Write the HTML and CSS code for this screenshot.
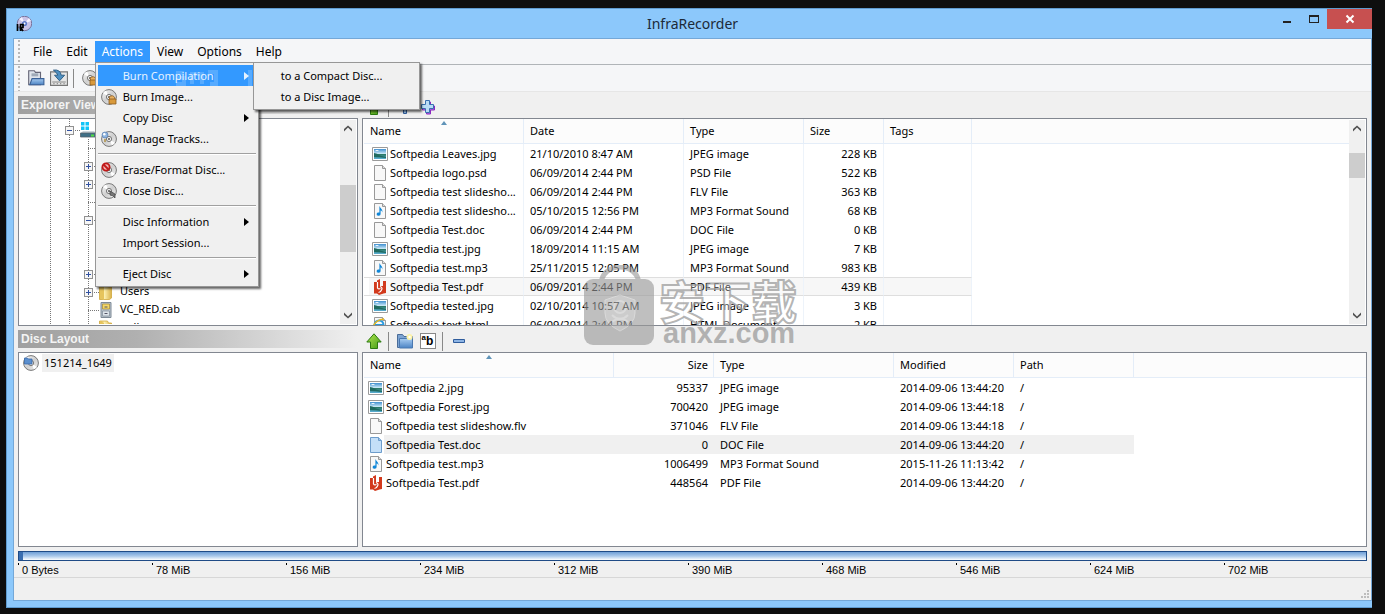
FILE: index.html
```html
<!DOCTYPE html>
<html lang="en">
<head>
<meta charset="utf-8">
<title>InfraRecorder</title>
<link rel="stylesheet" href="styles.css">
</head>
<body>
<svg class="defs" aria-hidden="true">
  <defs>
    <linearGradient id="g-disc" x1="0" y1="0" x2="1" y2="1"><stop offset="0" stop-color="#fff"/><stop offset=".5" stop-color="#cfcfcf"/><stop offset="1" stop-color="#f2f2f2"/></linearGradient>
    <linearGradient id="g-pic" x1="0" y1="0" x2="0" y2="1"><stop offset="0" stop-color="#3f8fd0"/><stop offset=".5" stop-color="#d4eefa"/><stop offset=".55" stop-color="#2c7a68"/><stop offset="1" stop-color="#5cb0d8"/></linearGradient>
    <linearGradient id="g-green" x1="0" y1="0" x2="1" y2="1"><stop offset="0" stop-color="#b5e853"/><stop offset="1" stop-color="#3f9a12"/></linearGradient>
    <linearGradient id="g-blue" x1="0" y1="0" x2="0" y2="1"><stop offset="0" stop-color="#a9cdf2"/><stop offset="1" stop-color="#4b83c4"/></linearGradient>
    <linearGradient id="g-fold" x1="0" y1="0" x2="1" y2="0"><stop offset="0" stop-color="#e0b84c"/><stop offset=".4" stop-color="#fdf0b0"/><stop offset="1" stop-color="#d9b24a"/></linearGradient>
  </defs>
  <symbol id="disc" viewBox="0 0 16 16"><circle cx="8" cy="8" r="7.4" fill="url(#g-disc)" stroke="#777"/><path d="M8 8L2 4a7 7 0 0 1 3-2.500zM8 8l6 4a7 7 0 0 1-3 2.300z" fill="#fff"/><circle cx="8" cy="8" r="2.600" fill="#eee" stroke="#777"/><circle cx="8" cy="8" r="1" fill="#555"/></symbol>
  <symbol id="burn" viewBox="0 0 16 16"><use href="#disc"/><path d="M8 8q4-3 6 1l-1 2H9z" fill="#e8b060" stroke="#8a5a20" stroke-width=".8"/><path d="M8 10h7v5H8z" fill="#d99a3c" stroke="#8a5a20" stroke-width=".8"/></symbol>
  <symbol id="tracks" viewBox="0 0 16 16"><use href="#disc"/><circle cx="4" cy="4" r="3" fill="#8db4e0" stroke="#5a7fb0" stroke-width=".7"/><circle cx="3.300" cy="3.200" r="1.200" fill="#fff"/><path d="M4 8v3" stroke="#b09040" stroke-width="1.500"/></symbol>
  <symbol id="erase" viewBox="0 0 16 16"><use href="#disc"/><circle cx="5" cy="5" r="3.600" fill="#f3b0b0" stroke="#c01818" stroke-width="1.800"/><path d="M2.500 2.500l5 5" stroke="#c01818" stroke-width="1.800"/></symbol>
  <symbol id="close-disc" viewBox="0 0 16 16"><use href="#disc"/><path d="M9 8l5 3v4l-2-2-3-1z" fill="#777" stroke="#444" stroke-width=".7"/></symbol>
  <symbol id="data-disc" viewBox="0 0 16 16"><use href="#disc"/><path d="M1.500 3h3l1 1h3.500v5H1.500z" fill="#5b8fce" stroke="#3868a8" stroke-width=".8"/></symbol>
  <symbol id="ir" viewBox="0 0 16 16"><circle cx="8.500" cy="7.500" r="7.200" fill="#c9c3e8" stroke="#77739c"/><path d="M8.500 7.500L13 2l2 3zM8.500 7.500L3 3l3-2z" fill="#f4f0ff"/><circle cx="8.500" cy="7.500" r="2.600" fill="#5c78c8"/><circle cx="8.500" cy="7.500" r="1" fill="#fff"/><path d="M1.500 8v7M4.500 15V8.500h2.500v3H4.500l2.500 3.500" stroke="#000" stroke-width="1.700" fill="none"/></symbol>
  <symbol id="open" viewBox="0 0 16 16"><path d="M1.500 1.500h5l1 1.500h4.500V14H1.500z" fill="#dfe5ec" stroke="#667"/><path d="M4 6h6M4 4.500h6" stroke="#8a97a6"/><path d="M4.500 8.500h10.500v5.500H2.500z" fill="url(#g-blue)" stroke="#3a6298"/></symbol>
  <symbol id="save" viewBox="0 0 16 16"><path d="M.5 2.500h15v12H.5z" fill="#e6e6e6" stroke="#777"/><path d="M2 11.500h12M3 13h1M6 13h1M9 13h1M12 13h1" stroke="#888"/><path d="M3 1q6-1 7 4.500h3l-4.500 5L4 5.500h3Q6 3 3 1z" fill="#4e8fc0" stroke="#28587f" stroke-width=".8"/></symbol>
  <symbol id="pic" viewBox="0 0 16 16"><path d="M.5 1.500h15v13H.5z" fill="#fff" stroke="#9a9a9a"/><path d="M2 3h12v10H2z" fill="url(#g-pic)"/><path d="M2 7q3 0 6 2.500L14 11v1q-7-1-12-1z" fill="#1f6a60"/><path d="M3 5q2-2 4 0" fill="#fff"/></symbol>
  <symbol id="page" viewBox="0 0 16 16"><path d="M2.500.5h8l3 3v12h-11z" fill="#f8f8f8" stroke="#999"/><path d="M10.500.5v3h3" fill="#ddd" stroke="#999"/></symbol>
  <symbol id="page-sel" viewBox="0 0 16 16"><path d="M2.500.5h8l3 3v12h-11z" fill="#c4dff8" stroke="#6d9ccb"/><path d="M10.500.5v3h3" fill="#9fc5ea" stroke="#6d9ccb"/></symbol>
  <symbol id="music" viewBox="0 0 16 16"><use href="#page"/><path d="M8 3.500c0 2 3 2.500 2.300 6-.3-1.700-1.200-2-1.700-2V11a2 1.600 0 1 1-1.200-1.400V3.500z" fill="#0f86d8"/></symbol>
  <symbol id="pdf" viewBox="0 0 16 16"><path d="M2 3h3V1.500L8 0v7h3V2h3v12l-2.500.5L7 16l-2-1.500H2z" fill="#d2391c"/><path d="M5.500 3v6q1 1.500 3 .5M8 7.500q3 1 1.500 3.500Q8.500 13.500 6.500 13.500" stroke="#fff" stroke-width="1.200" fill="none"/></symbol>
  <symbol id="html" viewBox="0 0 16 16"><use href="#page"/><circle cx="7" cy="8" r="4.500" fill="none" stroke="#2a9be0" stroke-width="2"/><path d="M3 8h8" stroke="#2a9be0" stroke-width="2"/><path d="M1 10Q3 3 12 2" stroke="#e8b820" stroke-width="1.500" fill="none"/></symbol>
  <symbol id="up" viewBox="0 0 16 16"><path d="M8 .8l7.200 8.200h-3.700v6.500h-7V9H.8z" fill="url(#g-green)" stroke="#2c7a10"/></symbol>
  <symbol id="newfolder" viewBox="0 0 16 16"><path d="M.5 1.500h5l1.500 2h8.500v11H.5z" fill="#7da4d2" stroke="#4a6c98"/><path d="M2.500 5.500h13v9.500h-13z" fill="url(#g-blue)" stroke="#4a78b0"/><circle cx="12.500" cy="4" r="3" fill="#fdf3a8"/><circle cx="12.500" cy="4" r="1.200" fill="#fff"/></symbol>
  <symbol id="plus" viewBox="0 0 16 16"><path d="M6.500 3h4v4h4v4h-4v4h-4v-4h-4V7h4z" fill="#b06fe0" stroke="#8a28c0"/><path d="M5.500 1.500h4v4h4v4h-4v4h-4v-4h-4v-4h4z" fill="#b9dcf5" stroke="#3a70b0"/></symbol>
  <symbol id="plus1" viewBox="0 0 16 16"><path d="M6.500 1.500h3v5h5v3h-5v5h-3v-5h-5v-3h5z" fill="#9cc4ee" stroke="#2f5c9c"/></symbol>
  <symbol id="minus" viewBox="0 0 16 16"><path d="M2.500 6.500h11v3h-11z" fill="#8db4e4" stroke="#2f5c9c"/></symbol>
  <symbol id="folder" viewBox="0 0 16 16"><path d="M1.500 1h8l1 2h3v11l-2 1.500h-10z" fill="url(#g-fold)" stroke="#d0a83c" stroke-width=".8"/><path d="M2 1l4 2v13l-4-2z" fill="#e6c45c"/></symbol>
  <symbol id="cab" viewBox="0 0 16 16"><path d="M3 .5h10v15H3z" fill="#b9c4ce" stroke="#7e8a96"/><path d="M4.500 2h7v5h-7z" fill="#f4d868" stroke="#a88a30" stroke-width=".7"/><path d="M4.500 9h7v5h-7z" fill="#dde4ea" stroke="#7e8a96" stroke-width=".7"/><path d="M6.500 5h3M6.500 11.500h3" stroke="#556"/></symbol>
  <symbol id="pc" viewBox="0 0 16 18"><path d="M1 1h3.500v3.500H1zM5.500 1H9v3.500H5.500zM1 5.500h3.500V9H1zM5.500 5.500H9V9H5.500z" fill="#10c4f8"/><path d="M3 10h11l2 2H1z" fill="#ccd4da"/><path d="M.5 12h15v4H.5z" fill="#3f6f86" stroke="#55606a" stroke-width=".8"/><path d="M11 13.500h3v2h-3z" fill="#50e040"/></symbol>
  <symbol id="chev" viewBox="0 0 8 8"><path d="M0 6.500L4 2.500l4 4V4L4 .5 0 4z" fill="#505050"/></symbol>
</svg>

<main class="window">
  <header class="titlebar">
    <svg class="i16"><use href="#ir"/></svg>
    <h1>InfraRecorder</h1>
    <div class="winbtns">
      <button class="winbtn" aria-label="Minimize"><svg width="10" height="10"><path d="M1 7h8v2H1z" fill="#222"/></svg></button>
      <button class="winbtn" aria-label="Maximize"><svg width="10" height="10"><path d="M0 1h10v8H0zM1 3v5h8V3z" fill="#222" fill-rule="evenodd"/></svg></button>
      <button class="winbtn close" aria-label="Close"><svg width="10" height="10"><path d="M1.500 1.500l7 7M8.500 1.500l-7 7" stroke="#fff" stroke-width="2"/></svg></button>
    </div>
  </header>

  <div class="client">
    <nav class="menubar grip">
      <button class="menu">File</button>
      <button class="menu">Edit</button>
      <div class="menuwrap">
        <button class="menu open" aria-expanded="true">Actions</button>
        <div class="dropdown actions">
          <button class="item hot"><span class="ic"></span><span>Burn Compilation</span><i class="arr"></i></button>
          <button class="item"><svg class="i16"><use href="#burn"/></svg><span>Burn Image...</span></button>
          <button class="item"><span class="ic"></span><span>Copy Disc</span><i class="arr"></i></button>
          <button class="item"><svg class="i16"><use href="#tracks"/></svg><span>Manage Tracks...</span></button>
          <hr>
          <button class="item"><svg class="i16"><use href="#erase"/></svg><span>Erase/Format Disc...</span></button>
          <button class="item"><svg class="i16"><use href="#close-disc"/></svg><span>Close Disc...</span></button>
          <hr>
          <button class="item"><span class="ic"></span><span>Disc Information</span><i class="arr"></i></button>
          <button class="item"><span class="ic"></span><span>Import Session...</span></button>
          <hr>
          <button class="item"><span class="ic"></span><span>Eject Disc</span><i class="arr"></i></button>
          <svg class="ghost" width="96" height="28"><path d="M0 6h8M0 6v5h8v6H0M16 17V7h10v10M32 5h8v12h-6M74 3v18h8v-12h10v14" fill="none" stroke="#fff" stroke-width="4" opacity=".18"/></svg>
          <div class="dropdown sub">
            <button class="item"><span class="ic"></span><span>to a Compact Disc...</span></button>
            <button class="item"><span class="ic"></span><span>to a Disc Image...</span></button>
          </div>
        </div>
      </div>
      <button class="menu">View</button>
      <button class="menu">Options</button>
      <button class="menu">Help</button>
    </nav>

    <div class="toolbar grip">
      <button class="tool" aria-label="Open"><svg class="i18"><use href="#open"/></svg></button>
      <button class="tool" aria-label="Save"><svg class="i18"><use href="#save"/></svg></button>
      <span class="tsep"></span>
      <button class="tool" aria-label="Burn"><svg class="i16"><use href="#burn"/></svg></button>
    </div>

    <div class="work">
      <h2 class="caption">Explorer View</h2>
      <div class="toolbar small">
        <button class="tool" aria-label="Up"><svg class="i16"><use href="#up"/></svg></button>
        <span class="tsep"></span>
        <button class="tool" aria-label="Add"><svg class="i16"><use href="#plus1"/></svg></button>
        <button class="tool" aria-label="Add all"><svg class="i16"><use href="#plus"/></svg></button>
      </div>

      <section class="pane">
        <div class="tree">
          <div class="node root"><b class="box"></b><svg class="i18"><use href="#pc"/></svg></div>
          <div class="kids">
            <div class="node"></div>
            <div class="node"><b class="box plus"></b></div>
            <div class="node"><b class="box plus"></b></div>
            <div class="node"></div>
            <div class="node"><b class="box"></b></div>
            <div class="node none"></div>
            <div class="node none"></div>
            <div class="node"><b class="box plus"></b></div>
            <div class="node"><b class="box plus"></b><svg class="i16"><use href="#folder"/></svg><span>Users</span></div>
            <div class="node"><svg class="i16"><use href="#cab"/></svg><span>VC_RED.cab</span></div>
            <div class="node"><svg class="i16"><use href="#folder"/></svg><span>null</span></div>
          </div>
        </div>
        <div class="scroll left"><svg class="i8"><use href="#chev"/></svg><div class="track"><div class="thumb"></div></div><svg class="i8 down"><use href="#chev"/></svg></div>
      </section>

      <section class="pane">
        <div class="listwrap">
          <table class="list lines">
            <colgroup><col class="c160"><col class="c160"><col class="c120"><col class="c80"><col class="c88"><col></colgroup>
            <thead><tr><th class="sorted">Name</th><th>Date</th><th>Type</th><th>Size</th><th>Tags</th><th class="fill"></th></tr></thead>
            <tbody>
              <tr><td><svg class="i16"><use href="#pic"/></svg>Softpedia Leaves.jpg</td><td>21/10/2010 8:47 AM</td><td>JPEG image</td><td class="num">228 KB</td><td></td><td></td></tr>
              <tr><td><svg class="i16"><use href="#page"/></svg>Softpedia logo.psd</td><td>06/09/2014 2:44 PM</td><td>PSD File</td><td class="num">522 KB</td><td></td><td></td></tr>
              <tr><td><svg class="i16"><use href="#page"/></svg>Softpedia test slidesho...</td><td>06/09/2014 2:44 PM</td><td>FLV File</td><td class="num">363 KB</td><td></td><td></td></tr>
              <tr><td><svg class="i16"><use href="#music"/></svg>Softpedia test slidesho...</td><td>05/10/2015 12:56 PM</td><td>MP3 Format Sound</td><td class="num">68 KB</td><td></td><td></td></tr>
              <tr><td><svg class="i16"><use href="#page"/></svg>Softpedia Test.doc</td><td>06/09/2014 2:44 PM</td><td>DOC File</td><td class="num">0 KB</td><td></td><td></td></tr>
              <tr><td><svg class="i16"><use href="#pic"/></svg>Softpedia test.jpg</td><td>18/09/2014 11:15 AM</td><td>JPEG image</td><td class="num">7 KB</td><td></td><td></td></tr>
              <tr><td><svg class="i16"><use href="#music"/></svg>Softpedia test.mp3</td><td>25/11/2015 12:05 PM</td><td>MP3 Format Sound</td><td class="num">983 KB</td><td></td><td></td></tr>
              <tr class="focus"><td><svg class="i16"><use href="#pdf"/></svg>Softpedia Test.pdf</td><td>06/09/2014 2:44 PM</td><td>PDF File</td><td class="num">439 KB</td><td></td><td></td></tr>
              <tr><td><svg class="i16"><use href="#pic"/></svg>Softpedia tested.jpg</td><td>02/10/2014 10:57 AM</td><td>JPEG image</td><td class="num">3 KB</td><td></td><td></td></tr>
              <tr><td><svg class="i16"><use href="#html"/></svg>Softpedia text.html</td><td>06/09/2014 2:44 PM</td><td>HTML Document</td><td class="num">2 KB</td><td></td><td></td></tr>
            </tbody>
          </table>
        </div>
        <div class="scroll right"><svg class="i8"><use href="#chev"/></svg><div class="track"><div class="thumb"></div></div><svg class="i8 down"><use href="#chev"/></svg></div>
      </section>

      <h2 class="caption">Disc Layout</h2>
      <div class="toolbar small">
        <button class="tool" aria-label="Up"><svg class="i16"><use href="#up"/></svg></button>
        <span class="tsep"></span>
        <button class="tool" aria-label="New folder"><svg class="i16"><use href="#newfolder"/></svg></button>
        <button class="tool" aria-label="Rename"><span class="ab"><sup>a</sup>b</span></button>
        <span class="tsep"></span>
        <button class="tool" aria-label="Remove"><svg class="i16"><use href="#minus"/></svg></button>
      </div>

      <section class="pane">
        <div class="disc"><svg class="i16"><use href="#data-disc"/></svg><span>151214_1649</span></div>
      </section>

      <section class="pane">
        <div class="listwrap">
          <table class="list tight">
            <colgroup><col class="c250"><col class="c100"><col class="c180"><col class="c120"><col class="c120"><col></colgroup>
            <thead><tr><th class="sorted">Name</th><th class="num">Size</th><th>Type</th><th>Modified</th><th>Path</th><th class="fill"></th></tr></thead>
            <tbody>
              <tr><td><svg class="i16"><use href="#pic"/></svg>Softpedia 2.jpg</td><td class="num">95337</td><td>JPEG image</td><td>2014-09-06 13:44:20</td><td>/</td><td></td></tr>
              <tr><td><svg class="i16"><use href="#pic"/></svg>Softpedia Forest.jpg</td><td class="num">700420</td><td>JPEG image</td><td>2014-09-06 13:44:18</td><td>/</td><td></td></tr>
              <tr><td><svg class="i16"><use href="#page"/></svg>Softpedia test slideshow.flv</td><td class="num">371046</td><td>FLV File</td><td>2014-09-06 13:44:18</td><td>/</td><td></td></tr>
              <tr class="picked"><td><svg class="i16"><use href="#page-sel"/></svg>Softpedia Test.doc</td><td class="num">0</td><td>DOC File</td><td>2014-09-06 13:44:20</td><td>/</td><td></td></tr>
              <tr><td><svg class="i16"><use href="#music"/></svg>Softpedia test.mp3</td><td class="num">1006499</td><td>MP3 Format Sound</td><td>2015-11-26 11:13:42</td><td>/</td><td></td></tr>
              <tr><td><svg class="i16"><use href="#pdf"/></svg>Softpedia Test.pdf</td><td class="num">448564</td><td>PDF File</td><td>2014-09-06 13:44:20</td><td>/</td><td></td></tr>
            </tbody>
          </table>
        </div>
      </section>
    </div>

    <div class="space">
      <div class="meter"><div class="used"></div></div>
      <div class="ruler"><span>0 Bytes</span><span>78 MiB</span><span>156 MiB</span><span>234 MiB</span><span>312 MiB</span><span>390 MiB</span><span>468 MiB</span><span>546 MiB</span><span>624 MiB</span><span>702 MiB</span></div>
    </div>
    <footer class="status"><svg width="8" height="8"><path d="M6 0h2v2H6zM3 3h2v2H3zM6 3h2v2H6zM0 6h2v2H0zM3 6h2v2H3zM6 6h2v2H6z" fill="#bdbdbd"/></svg></footer>
  </div>
</main>

<svg class="mark" width="214" height="82" aria-hidden="true">
  <g opacity=".62">
    <path d="M17 20C17 -4 55 -4 55 20" fill="none" stroke="#999" stroke-width="5"/>
    <rect x="0" y="14" width="70" height="66" rx="9" fill="#999"/>
    <path d="M36 30l15 5v13q0 11-15 18-15-7-15-18V35z" fill="#adadad" stroke="#c4c4c4"/>
    <circle cx="36" cy="42" r="6" fill="none" stroke="#c4c4c4" stroke-width="2"/>
    <path d="M28 50q8 8 16 0M28 57q8-7 16 0" fill="none" stroke="#c4c4c4" stroke-width="2"/>
  </g>
  <text x="75" y="54" class="cjk">安下载</text>
  <text x="79" y="78" class="dom">anxz.com</text>
</svg>
</body>
</html>
```
FILE: styles.css
```css
* { box-sizing: border-box; }
body {
  margin: 0; height: 100vh; padding: 8px 13px 6px 6px; background: #0e0e0e;
  font: 11px/16px "Noto Sans", "Open Sans", sans-serif; color: #000;
  display: flex; position: relative; overflow: hidden;
}
button { font: inherit; color: inherit; background: none; border: 0; padding: 0; margin: 0; text-align: left; }
svg { display: block; flex: none; }
.defs { position: absolute; width: 0; height: 0; }
.i8 { width: 8px; height: 8px; }
.i16 { width: 16px; height: 16px; }
.i18 { width: 18px; height: 18px; }
.down { transform: rotate(180deg); }

.window {
  flex: 1; min-width: 0; display: flex; flex-direction: column; background: #8cc8fb;
  border: 1px solid #5f9bcf; border-right: 0; padding: 0 0 6px 6px;
}
.titlebar { height: 29px; display: flex; align-items: center; justify-content: space-between; padding-left: 3px; position: relative; }
.titlebar h1 { margin: 0; font-size: 14px; line-height: 20px; font-weight: 400; position: absolute; left: 0; right: 0; text-align: center; color: #1c2a38; }
.winbtns { display: flex; align-self: flex-start; height: 20px; position: relative; }
.winbtn { width: 27px; display: flex; align-items: center; justify-content: center; }
.winbtn.close { width: 45px; background: #c75050; }

.client { flex: 1; min-height: 0; display: flex; flex-direction: column; background: #f0f0f0; border: 1px solid #74a8d8; }
.menubar, .toolbar { display: flex; align-items: center; }
.grip { background: #f5f6f8 radial-gradient(circle, #b8b8b8 1px, transparent 1px) 3px 0 / 4px 4px repeat-y; }
.menubar { height: 26px; padding-left: 12px; border-bottom: 1px solid #b0b4b8; font-size: 12px; }
.menu { height: 21px; padding: 0 7px; line-height: 20px; display: block; }
.menu.open { background: #3399ff; color: #fff; }
.menuwrap { position: relative; }

.dropdown {
  position: absolute; background: #f0f0f0; border: 1px solid #979797; padding: 2px;
  box-shadow: 2px 2px 2px #0009; z-index: 5; color: #000;
}
.actions { top: 21px; left: 0; width: 164px; }
.sub { top: -1px; left: 157px; width: 167px; }
.item { display: flex; align-items: center; gap: 6px; width: 100%; height: 21px; padding: 0 7px 0 3px; font-size: 11px; white-space: nowrap; }
.ic { width: 16px; }
.hot { background: #3399ff; color: #e6f2ff; }
.arr { margin-left: auto; border: 4px solid transparent; border-left: 5px solid currentColor; border-right: 0; }
.dropdown hr { margin: 4px 0; height: 2px; border: 0; border-top: 1px solid #a0a0a0; background: #fff; }
.ghost { position: absolute; left: 80px; top: 4px; pointer-events: none; }

.toolbar { height: 27px; padding-left: 10px; border-bottom: 1px solid #e6e6e6; }
.toolbar.small { height: 18px; margin-top: 2px; padding: 0; border: 0; }
.tool { width: 23px; height: 23px; display: flex; align-items: center; justify-content: center; flex: none; }
.tsep { width: 8px; height: 19px; flex: none; background: linear-gradient(#888, #888) 3px 0 / 1px 100% no-repeat; }
.ab { width: 16px; height: 16px; border: 1px solid #888; background: #fff; font: bold 12px/15px "Liberation Sans", sans-serif; text-align: center; }
.ab sup { font-size: 8px; line-height: 6px; vertical-align: 5px; }

.work {
  flex: 1; min-height: 0; display: grid; gap: 4px; padding: 4px 4px 0;
  grid-template-columns: 340px minmax(0, 1fr);
  grid-template-rows: 18px minmax(0, 208fr) 18px minmax(0, 195fr);
}
.caption { margin: 0; padding-left: 3px; font: bold 12px/18px "Liberation Sans", sans-serif; color: #f4f4f4; background: linear-gradient(90deg, #a0a0a0, #b0b0b0 35%, #f0f0f0); }
.pane { background: #fff; border: 1px solid #828790; display: flex; min-width: 0; min-height: 0; overflow: hidden; }

.tree {
  flex: 1; padding: 2px 0 0 31px; overflow: hidden; margin-bottom: 1px;
  background:
    repeating-linear-gradient(#777 0 1px, transparent 1px 2px) 31px 0 / 1px 100% no-repeat,
    repeating-linear-gradient(#777 0 1px, transparent 1px 2px) 50px 0 / 1px 100% no-repeat;
}
.kids { margin-left: 38px; background: repeating-linear-gradient(#777 0 1px, transparent 1px 2px) 0 0 / 1px 100% no-repeat; }
.node { height: 18px; display: flex; align-items: center; position: relative; padding-left: 10px; background: repeating-linear-gradient(90deg, #777 0 1px, transparent 1px 2px) 0 9px / 12px 1px no-repeat; }
.node.root { margin-left: 19px; }
.node.none { background: none; }
.node span { margin-left: 6px; line-height: 14px; padding-bottom: 2px; }
.box { position: absolute; left: -4px; top: 5px; width: 9px; height: 9px; border: 1px solid #919191; background: linear-gradient(#3050a0, #3050a0) 1px 3px / 5px 1px no-repeat, #f6f6f6; }
.box.plus { background: linear-gradient(#3050a0, #3050a0) 1px 3px / 5px 1px no-repeat, linear-gradient(#3050a0, #3050a0) 3px 1px / 1px 5px no-repeat, #f6f6f6; }

.scroll { width: 16px; margin: 1px 1px 1px 0; background: #f0f0f0; display: flex; flex-direction: column; align-items: center; padding: 5px 0; flex: none; }
.track { flex: 1; align-self: stretch; display: flex; flex-direction: column; }
.thumb { background: #cdcdcd; }
.left .track { padding-top: 52px; }
.left .thumb { height: 67px; }
.right .track { padding-top: 20px; }
.right .thumb { height: 25px; }

.listwrap { flex: 1; min-width: 0; overflow: hidden; padding-left: 1px; }
.list { table-layout: fixed; width: 100%; border-collapse: separate; border-spacing: 0; }
.c80 { width: 80px; } .c88 { width: 88px; } .c100 { width: 100px; } .c120 { width: 120px; }
.c160 { width: 160px; } .c180 { width: 180px; } .c250 { width: 250px; }
.list th { height: 25px; padding: 0 6px; font-weight: 400; text-align: left; background: #fcfcfc; border-right: 1px solid #e4edf8; border-bottom: 1px solid #e4edf8; position: relative; }
.list th.fill { border-right: 0; }
.sorted::after { content: ""; position: absolute; left: 50%; top: 2px; margin-left: -3px; border: 3px solid transparent; border-top: 0; border-bottom: 4px solid #5f93b8; }
.list td { height: 19px; padding: 0 6px; white-space: nowrap; }
.list td:first-child { padding: 0 0 0 4px; }
.lines td:first-child { padding-left: 8px; }
.lines td:not(:last-child) { border-right: 1px solid #edf3fa; }
.list td svg { display: inline-block; vertical-align: top; margin-right: 2px; }
.list .num { text-align: right; }
.list th.num { padding-right: 5px; }
.focus td:not(:last-child) { background: #f7f7f7; border-top: 1px solid #dedede; border-bottom: 1px solid #dedede; }
.focus td:first-child { background: linear-gradient(#f7f7f7, #f7f7f7) 5px 0 no-repeat; }
.picked td:not(:last-child) { background: #f0f0f0; }
.picked td:first-child { background: linear-gradient(#f0f0f0, #f0f0f0) 20px 0 no-repeat; }

.disc { display: flex; align-items: center; gap: 3px; height: 18px; margin: 1px 4px; }
.disc span { background: #f0f0f0; padding: 0 2px; line-height: 18px; }

.space { padding: 4px 4px 0; }
.meter { height: 10px; border: 1px solid #1f4b86; background: linear-gradient(#6f9fd6, #a9c8ea 50%, #fff); }
.used { width: 4px; height: 100%; background: #3a6eb0; }
.ruler { display: flex; height: 16px; padding: 2px 9px 0 0; }
.ruler span { flex: 1; padding-left: 4px; font: 11px/14px "Liberation Sans", sans-serif; background: linear-gradient(#000, #000) 0 0 / 1px 2px no-repeat; }
.status { height: 23px; border-top: 1px solid #d7d7d7; display: flex; justify-content: flex-end; align-items: flex-end; padding: 2px; }

.mark { position: absolute; left: 50%; top: 265px; transform: translateX(-109px); pointer-events: none; z-index: 9; }
.cjk { font: bold 46px "Noto Sans CJK SC", sans-serif; fill: #fff5; stroke: #999b; stroke-width: 2px; }
.dom { font: bold 29px "Liberation Sans", sans-serif; fill: #999b; }
```
